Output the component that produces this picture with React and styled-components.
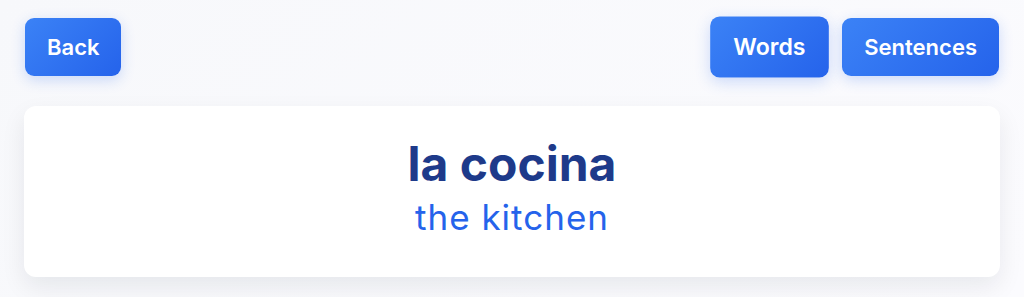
import styled, { createGlobalStyle } from 'styled-components';

const GlobalStyle = createGlobalStyle`
  html, body {
    margin: 0;
    padding: 0;
    background: #f8f9fc;
  }

  body {
    font-family: Inter, "Noto Sans", sans-serif;
  }
`;

const Page = styled.div`
  display: flex;
  flex-direction: column;
  gap: 30px;
  min-height: 297px;
  box-sizing: border-box;
  padding: 18px 24px 0;
  background: linear-gradient(135deg, #f7f8fb 0%, #fbfbfe 100%);
`;

const Toolbar = styled.div`
  display: flex;
  justify-content: space-between;
  align-items: center;
  padding: 0 1px;
`;

const Group = styled.div`
  display: flex;
  gap: 16px;
`;

const Button = styled.button`
  height: 58px;
  padding: 0 22px;
  border: none;
  border-radius: 9px;
  background: linear-gradient(135deg, #3b82f6 0%, #2563eb 100%);
  color: #fff;
  font-family: Inter, "Noto Sans", sans-serif;
  font-size: 22px;
  font-weight: 600;
  box-shadow: 0 4px 14px rgba(37, 99, 235, 0.22);
  transform: ${(p) => (p.$active ? 'scale(1.05)' : 'none')};
  cursor: pointer;
`;

const Card = styled.div`
  display: flex;
  flex-direction: column;
  align-items: center;
  padding: 30px 20px 35px;
  background: #fff;
  border-radius: 12px;
  box-shadow: 0 10px 25px rgba(15, 23, 42, 0.08);
`;

const Word = styled.h1`
  margin: 0;
  color: #1e3a8a;
  font-size: 48px;
  font-weight: 700;
  line-height: 56px;
`;

const Meaning = styled.p`
  margin: 0;
  color: #2563eb;
  font-size: 35px;
  font-weight: 400;
  letter-spacing: 1px;
  line-height: 50px;
`;

export default function App() {
  return (
    <>
      <GlobalStyle />
      <Page>
        <Toolbar>
          <Button type="button">Back</Button>
          <Group>
            <Button type="button" $active>Words</Button>
            <Button type="button">Sentences</Button>
          </Group>
        </Toolbar>
        <Card>
          <Word>la cocina</Word>
          <Meaning>the kitchen</Meaning>
        </Card>
      </Page>
    </>
  );
}
